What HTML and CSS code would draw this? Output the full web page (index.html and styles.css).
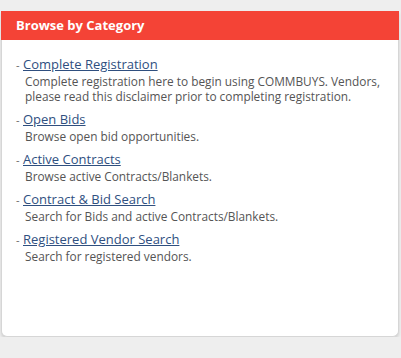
FILE: index.html
```html
<!DOCTYPE html>
<html>
<head>
<meta charset="utf-8">
<link rel="stylesheet" href="styles.css">
</head>
<body>
<div class="card">
  <div class="card-header">Browse by Category</div>
  <ul class="cat-list">
    <li class="cat-item">
      <div class="cat-title"><span class="dash">-</span><a href="#">Complete Registration</a></div>
      <div class="cat-desc">Complete registration here to begin using COMMBUYS. Vendors, please read this disclaimer prior to completing registration.</div>
    </li>
    <li class="cat-item">
      <div class="cat-title"><span class="dash">-</span><a href="#">Open Bids</a></div>
      <div class="cat-desc">Browse open bid opportunities.</div>
    </li>
    <li class="cat-item">
      <div class="cat-title"><span class="dash">-</span><a href="#">Active Contracts</a></div>
      <div class="cat-desc">Browse active Contracts/Blankets.</div>
    </li>
    <li class="cat-item">
      <div class="cat-title"><span class="dash">-</span><a href="#">Contract &amp; Bid Search</a></div>
      <div class="cat-desc">Search for Bids and active Contracts/Blankets.</div>
    </li>
    <li class="cat-item">
      <div class="cat-title"><span class="dash">-</span><a href="#">Registered Vendor Search</a></div>
      <div class="cat-desc">Search for registered vendors.</div>
    </li>
  </ul>
</div>
</body>
</html>
```
FILE: styles.css
```css
html, body {
  margin: 0;
  padding: 0;
  background: #eeeeee;
  font-family: "Open Sans", "Liberation Sans", sans-serif;
}
body {
  padding: 11px 2px 0 1px;
}
.card {
  background: #ffffff;
  height: 326px;
  border: 1px solid #d6d6d6;
  border-top: none;
  border-radius: 0 0 6px 6px;
  box-shadow: 0 2px 3px rgba(0, 0, 0, 0.12);
  box-sizing: border-box;
}
.card-header {
  background: #f44336;
  color: #ffffff;
  font-weight: 700;
  font-size: 13px;
  height: 29px;
  line-height: 29px;
  padding-left: 15px;
  margin: 0 -1px;
}
.cat-list {
  list-style: none;
  margin: 0;
  padding: 15px 2px 0 14px;
}
.cat-item {
  margin-bottom: 6px;
}
.cat-title {
  font-size: 13px;
  line-height: 18px;
  color: #555555;
}
.dash {
  display: inline-block;
  width: 7px;
  font-size: 11px;
  color: #666666;
}
.cat-title a {
  color: #2f4f7f;
  text-decoration: underline;
}
.cat-desc {
  font-size: 11.85px;
  line-height: 15px;
  color: #555555;
  padding-left: 9px;
}
```
